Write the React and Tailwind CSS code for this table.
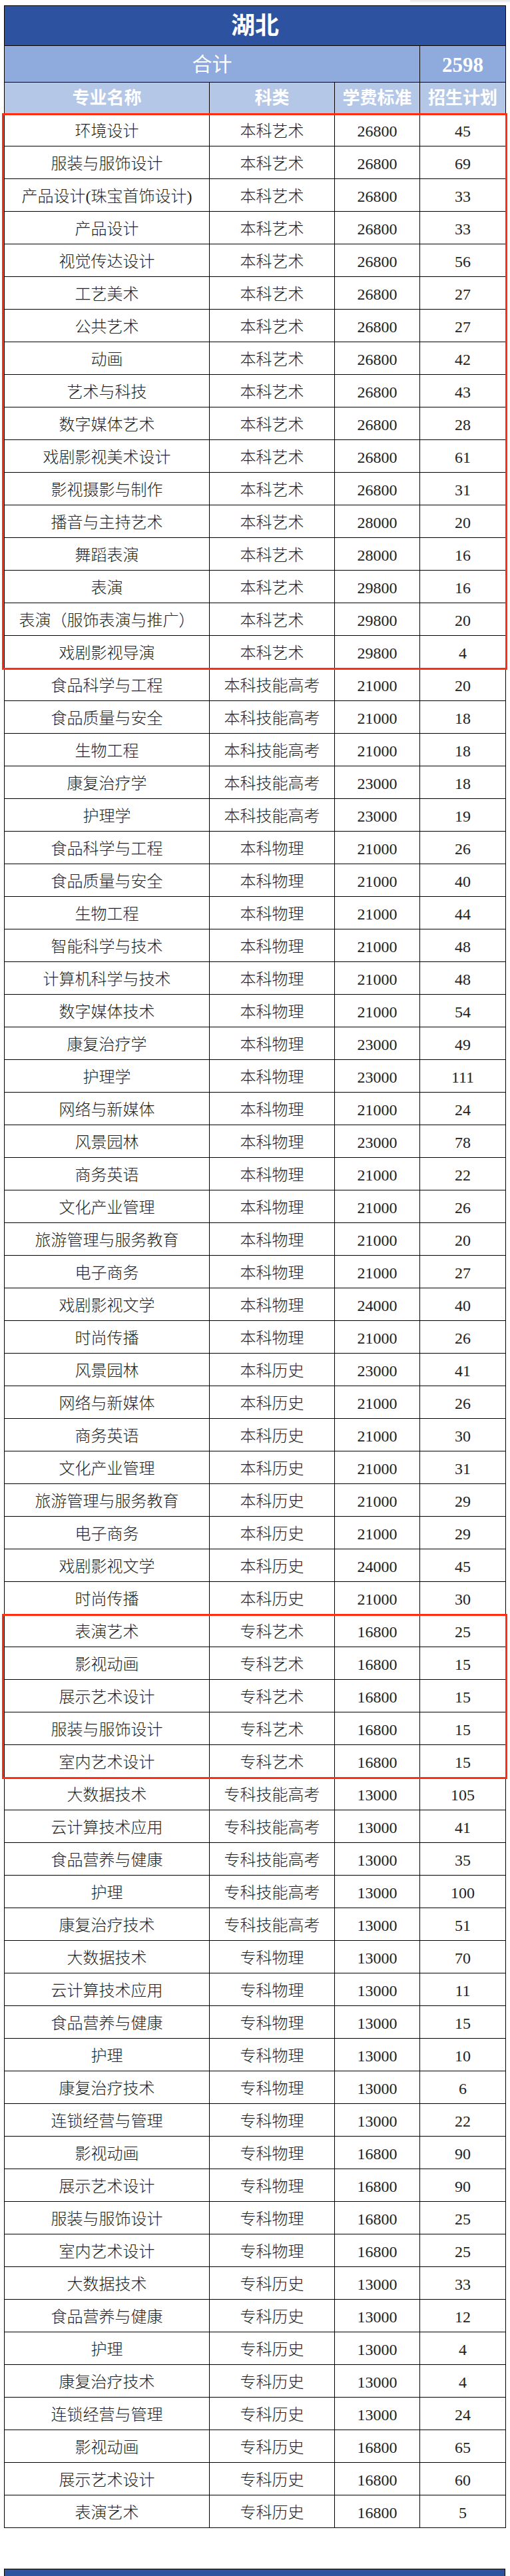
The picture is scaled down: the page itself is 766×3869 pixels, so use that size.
import React from "react";

const rows = [
  ["环境设计", "本科艺术", "26800", "45"],
  ["服装与服饰设计", "本科艺术", "26800", "69"],
  ["产品设计(珠宝首饰设计)", "本科艺术", "26800", "33"],
  ["产品设计", "本科艺术", "26800", "33"],
  ["视觉传达设计", "本科艺术", "26800", "56"],
  ["工艺美术", "本科艺术", "26800", "27"],
  ["公共艺术", "本科艺术", "26800", "27"],
  ["动画", "本科艺术", "26800", "42"],
  ["艺术与科技", "本科艺术", "26800", "43"],
  ["数字媒体艺术", "本科艺术", "26800", "28"],
  ["戏剧影视美术设计", "本科艺术", "26800", "61"],
  ["影视摄影与制作", "本科艺术", "26800", "31"],
  ["播音与主持艺术", "本科艺术", "28000", "20"],
  ["舞蹈表演", "本科艺术", "28000", "16"],
  ["表演", "本科艺术", "29800", "16"],
  ["表演（服饰表演与推广）", "本科艺术", "29800", "20"],
  ["戏剧影视导演", "本科艺术", "29800", "4"],
  ["食品科学与工程", "本科技能高考", "21000", "20"],
  ["食品质量与安全", "本科技能高考", "21000", "18"],
  ["生物工程", "本科技能高考", "21000", "18"],
  ["康复治疗学", "本科技能高考", "23000", "18"],
  ["护理学", "本科技能高考", "23000", "19"],
  ["食品科学与工程", "本科物理", "21000", "26"],
  ["食品质量与安全", "本科物理", "21000", "40"],
  ["生物工程", "本科物理", "21000", "44"],
  ["智能科学与技术", "本科物理", "21000", "48"],
  ["计算机科学与技术", "本科物理", "21000", "48"],
  ["数字媒体技术", "本科物理", "21000", "54"],
  ["康复治疗学", "本科物理", "23000", "49"],
  ["护理学", "本科物理", "23000", "111"],
  ["网络与新媒体", "本科物理", "21000", "24"],
  ["风景园林", "本科物理", "23000", "78"],
  ["商务英语", "本科物理", "21000", "22"],
  ["文化产业管理", "本科物理", "21000", "26"],
  ["旅游管理与服务教育", "本科物理", "21000", "20"],
  ["电子商务", "本科物理", "21000", "27"],
  ["戏剧影视文学", "本科物理", "24000", "40"],
  ["时尚传播", "本科物理", "21000", "26"],
  ["风景园林", "本科历史", "23000", "41"],
  ["网络与新媒体", "本科历史", "21000", "26"],
  ["商务英语", "本科历史", "21000", "30"],
  ["文化产业管理", "本科历史", "21000", "31"],
  ["旅游管理与服务教育", "本科历史", "21000", "29"],
  ["电子商务", "本科历史", "21000", "29"],
  ["戏剧影视文学", "本科历史", "24000", "45"],
  ["时尚传播", "本科历史", "21000", "30"],
  ["表演艺术", "专科艺术", "16800", "25"],
  ["影视动画", "专科艺术", "16800", "15"],
  ["展示艺术设计", "专科艺术", "16800", "15"],
  ["服装与服饰设计", "专科艺术", "16800", "15"],
  ["室内艺术设计", "专科艺术", "16800", "15"],
  ["大数据技术", "专科技能高考", "13000", "105"],
  ["云计算技术应用", "专科技能高考", "13000", "41"],
  ["食品营养与健康", "专科技能高考", "13000", "35"],
  ["护理", "专科技能高考", "13000", "100"],
  ["康复治疗技术", "专科技能高考", "13000", "51"],
  ["大数据技术", "专科物理", "13000", "70"],
  ["云计算技术应用", "专科物理", "13000", "11"],
  ["食品营养与健康", "专科物理", "13000", "15"],
  ["护理", "专科物理", "13000", "10"],
  ["康复治疗技术", "专科物理", "13000", "6"],
  ["连锁经营与管理", "专科物理", "13000", "22"],
  ["影视动画", "专科物理", "16800", "90"],
  ["展示艺术设计", "专科物理", "16800", "90"],
  ["服装与服饰设计", "专科物理", "16800", "25"],
  ["室内艺术设计", "专科物理", "16800", "25"],
  ["大数据技术", "专科历史", "13000", "33"],
  ["食品营养与健康", "专科历史", "13000", "12"],
  ["护理", "专科历史", "13000", "4"],
  ["康复治疗技术", "专科历史", "13000", "4"],
  ["连锁经营与管理", "专科历史", "13000", "24"],
  ["影视动画", "专科历史", "16800", "65"],
  ["展示艺术设计", "专科历史", "16800", "60"],
  ["表演艺术", "专科历史", "16800", "5"],
];

function Row({ r }) {
  return (
    <div className="grid grid-cols-[308px_188px_128px_128px] h-[49px] border-b border-black text-[24px] leading-none text-[#222] font-light">
      <div className="flex items-center justify-center border-r border-black pt-[4px] whitespace-nowrap">{r[0]}</div>
      <div className="flex items-center justify-center border-r border-black pt-[4px]">{r[1]}</div>
      <div className="flex items-center justify-center border-r border-black pt-[4px]">{r[2]}</div>
      <div className="flex items-center justify-center pt-[4px]">{r[3]}</div>
    </div>
  );
}

function RedGroup({ items }) {
  return (
    <div className="relative">
      {items.map((r, i) => (
        <Row key={i} r={r} />
      ))}
      <div className="absolute top-[-1px] bottom-[-2px] left-[-4px] right-[-3px] border-[3px] border-[#ff2d12] pointer-events-none" />
    </div>
  );
}

export default function App() {
  const g1 = rows.slice(0, 17);
  const p1 = rows.slice(17, 46);
  const g2 = rows.slice(46, 51);
  const p2 = rows.slice(51);
  return (
    <div className="relative bg-white w-[766px] pt-[8px] pl-[6px] font-['Liberation_Serif','Noto_Sans_CJK_SC',serif]">
      <div className="absolute top-0 right-0 w-[150px] h-[5px] bg-linear-to-b from-[#e6e6e6] to-white" />
      <div className="w-[754px] border-t border-l border-r border-black">
        <div className="h-[60px] border-b border-black bg-[#2d529f] flex items-center justify-center text-white text-[36px] font-bold leading-none">
          湖北
        </div>
        <div className="grid grid-cols-[624px_128px] h-[55px] border-b border-black bg-[#8faadc] text-white leading-none">
          <div className="flex items-center justify-center border-r border-black text-[30px] pt-[2px]">合计</div>
          <div className="flex items-center justify-center text-[31px] font-bold pt-[2px]">2598</div>
        </div>
        <div className="grid grid-cols-[308px_188px_128px_128px] h-[47px] border-b border-black bg-[#b4c7e7] text-white text-[26px] font-bold leading-none">
          <div className="flex items-center justify-center border-r border-black pt-[2px]">专业名称</div>
          <div className="flex items-center justify-center border-r border-black pt-[2px]">科类</div>
          <div className="flex items-center justify-center border-r border-black pt-[2px]">学费标准</div>
          <div className="flex items-center justify-center pt-[2px]">招生计划</div>
        </div>
        <RedGroup items={g1} />
        {p1.map((r, i) => (
          <Row key={"a" + i} r={r} />
        ))}
        <RedGroup items={g2} />
        {p2.map((r, i) => (
          <Row key={"b" + i} r={r} />
        ))}
      </div>
      <div className="mt-[61px] w-[753px] h-[11px] border-t border-l border-r border-black bg-[#2d529f]" />
    </div>
  );
}
